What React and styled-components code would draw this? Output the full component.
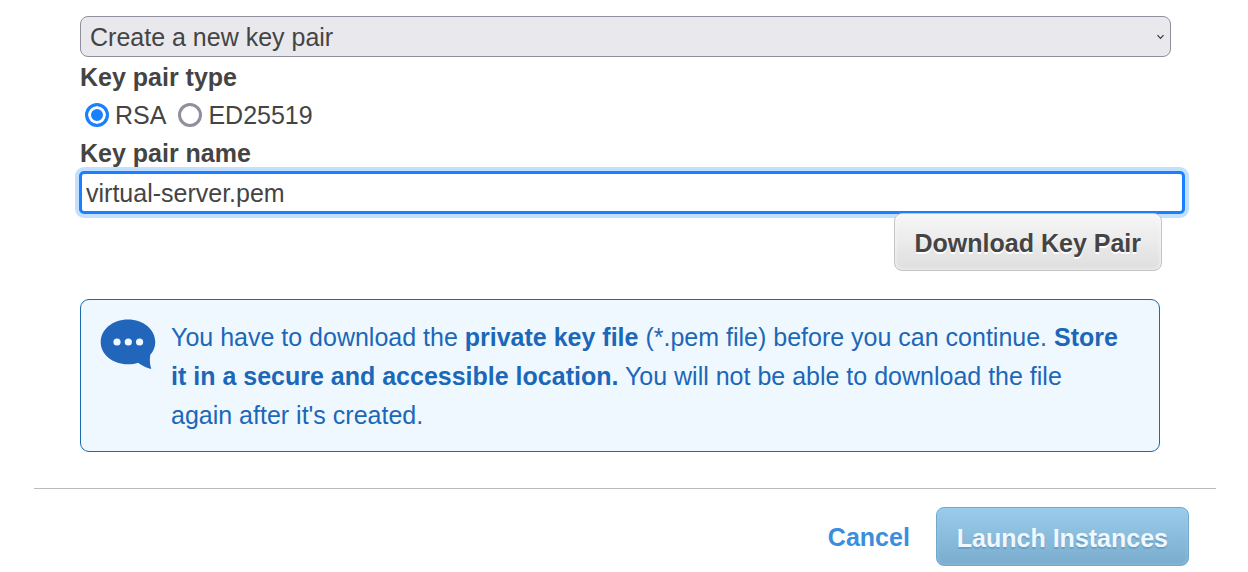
import React, { useState } from "react";
import styled, { createGlobalStyle } from "styled-components";

const GlobalStyle = createGlobalStyle`
  *, *::before, *::after { box-sizing: border-box; }
  body {
    margin: 0;
    background: #fff;
    color: #444;
    font-family: "Liberation Sans", Arial, sans-serif;
    font-size: 25px;
    line-height: 38px;
  }
  button, input, select { font: inherit; color: inherit; }
`;

const Dialog = styled.main`
  padding: 16px 32px 6px 34px;
`;

const Form = styled.form`
  display: flex;
  flex-direction: column;
  padding-left: 46px;
`;

const SelectWrap = styled.div`
  position: relative;
  margin-right: 45px;
  margin-bottom: 1px;
`;

const Select = styled.select`
  display: block;
  width: 100%;
  height: 41px;
  padding: 0 32px 0 9px;
  appearance: none;
  background: #e9e9ed;
  border: 1px solid #8f8f9d;
  border-radius: 8px;
`;

const SelectArrow = styled.svg`
  position: absolute;
  top: 18px;
  right: 7px;
  width: 7px;
  height: 6px;
  pointer-events: none;
`;

const Fieldset = styled.fieldset`
  margin: 0;
  padding: 0;
  border: 0;
`;

const Legend = styled.legend`
  padding: 0;
  font-weight: bold;
`;

const RadioRow = styled.div`
  display: flex;
  gap: 12px;
  padding-left: 5px;
`;

const RadioLabel = styled.label`
  display: flex;
  align-items: center;
  gap: 6px;
`;

const Radio = styled.input`
  appearance: none;
  width: 24px;
  height: 24px;
  margin: 0;
  border: 3px solid #8f8f9d;
  border-radius: 50%;
  background: #fff;

  &:checked {
    border-color: #1a80ff;
    background: #1a80ff;
    box-shadow: inset 0 0 0 3px #fff;
  }
`;

const NameLabel = styled.label`
  font-weight: bold;
`;

const NameInput = styled.input`
  height: 43px;
  margin: -1px 31px 0 -1px;
  padding: 1px 4px 0;
  border: 3px solid #1a80ff;
  border-radius: 5px;
  outline: none;
  background: #fff;
  box-shadow: 0 0 0 4px #c3e1ff;
`;

const Button = styled.button`
  height: ${(p) => (p.$primary ? 59 : 58)}px;
  padding: 2px 20px 0;
  border: 1px solid ${(p) => (p.$primary ? "#72a9cb" : "#c4c4c4")};
  border-radius: 8px;
  font-weight: bold;
  white-space: nowrap;
  color: ${(p) => (p.$primary ? "#f0f8ff" : "#444")};
  background: ${(p) =>
    p.$primary
      ? "linear-gradient(#9bccec, #7aaccd)"
      : "linear-gradient(#f7f7f7, #dedede)"};
  text-shadow: ${(p) => (p.$primary ? "0 2px 1px #6d9fc0" : "0 2px 0 #fff")};
  box-shadow: inset 0 0 4px
    ${(p) => (p.$primary ? "rgba(155, 204, 236, 0.6)" : "rgba(255, 255, 255, 0.8)")};
`;

const DownloadButton = styled(Button)`
  position: relative;
  align-self: flex-end;
  margin: -1px 54px 28px 0;
`;

const Notice = styled.section`
  display: flex;
  align-items: flex-start;
  gap: 15px;
  margin: 0 56px 36px 46px;
  padding: 18px 30px 16px 19px;
  border: 1px solid #196cb0;
  border-radius: 9px;
  background: #f0f8ff;
  color: #1b67b8;
`;

const SpeechIcon = styled.svg`
  flex: none;
  width: 56px;
  height: 52px;
`;

const NoticeText = styled.p`
  margin: 0;
  line-height: 39px;
`;

const Footer = styled.footer`
  display: flex;
  justify-content: flex-end;
  align-items: center;
  gap: 26px;
  padding: 18px 27px 0 0;
  border-top: 1px solid #bbb;
`;

const CancelLink = styled.a`
  color: #3b8ede;
  font-weight: bold;
  text-decoration: none;
`;

export default function App() {
  const [type, setType] = useState("rsa");
  const [name, setName] = useState("virtual-server.pem");

  return (
    <>
      <GlobalStyle />
      <Dialog>
        <Form onSubmit={(e) => e.preventDefault()}>
          <SelectWrap>
            <Select aria-label="Key pair option">
              <option>Create a new key pair</option>
            </Select>
            <SelectArrow viewBox="0 0 7 6" aria-hidden="true">
              <path d="M.5 1.2 3.5 4.3 6.5 1.2" fill="none" stroke="#38383d" strokeWidth="1.2" />
            </SelectArrow>
          </SelectWrap>
          <Fieldset>
            <Legend>Key pair type</Legend>
            <RadioRow>
              <RadioLabel>
                <Radio type="radio" name="type" checked={type === "rsa"} onChange={() => setType("rsa")} />
                RSA
              </RadioLabel>
              <RadioLabel>
                <Radio type="radio" name="type" checked={type === "ed25519"} onChange={() => setType("ed25519")} />
                ED25519
              </RadioLabel>
            </RadioRow>
          </Fieldset>
          <NameLabel htmlFor="key-name">Key pair name</NameLabel>
          <NameInput id="key-name" type="text" value={name} onChange={(e) => setName(e.target.value)} />
          <DownloadButton type="button">Download Key Pair</DownloadButton>
        </Form>
        <Notice>
          <SpeechIcon viewBox="0 0 56 52" aria-hidden="true">
            <path
              d="M28 1.500C12.500 1.500 .7 11.600 .7 24S12.500 46.300 28 46.300C31.500 46.300 35 45.700 38 44.700 42 47.500 46.500 49.800 51.300 51 49.800 46.500 49.500 41.500 50.300 36.800 53.500 33.300 55.300 28.700 55.300 24 55.300 11.600 43.500 1.500 28 1.500Z"
              fill="#2166bb"
            />
            <g fill="#f0f8ff">
              <circle cx="17" cy="24" r="3.600" />
              <circle cx="28.300" cy="24" r="3.600" />
              <circle cx="39.600" cy="24" r="3.600" />
            </g>
          </SpeechIcon>
          <NoticeText>
            You have to download the <b>private key file</b> (*.pem file) before you can continue.{" "}
            <b>Store it in a secure and accessible location.</b> You will not be able to download the
            file again after it's created.
          </NoticeText>
        </Notice>
        <Footer>
          <CancelLink href="#cancel">Cancel</CancelLink>
          <Button type="button" $primary>Launch Instances</Button>
        </Footer>
      </Dialog>
    </>
  );
}
